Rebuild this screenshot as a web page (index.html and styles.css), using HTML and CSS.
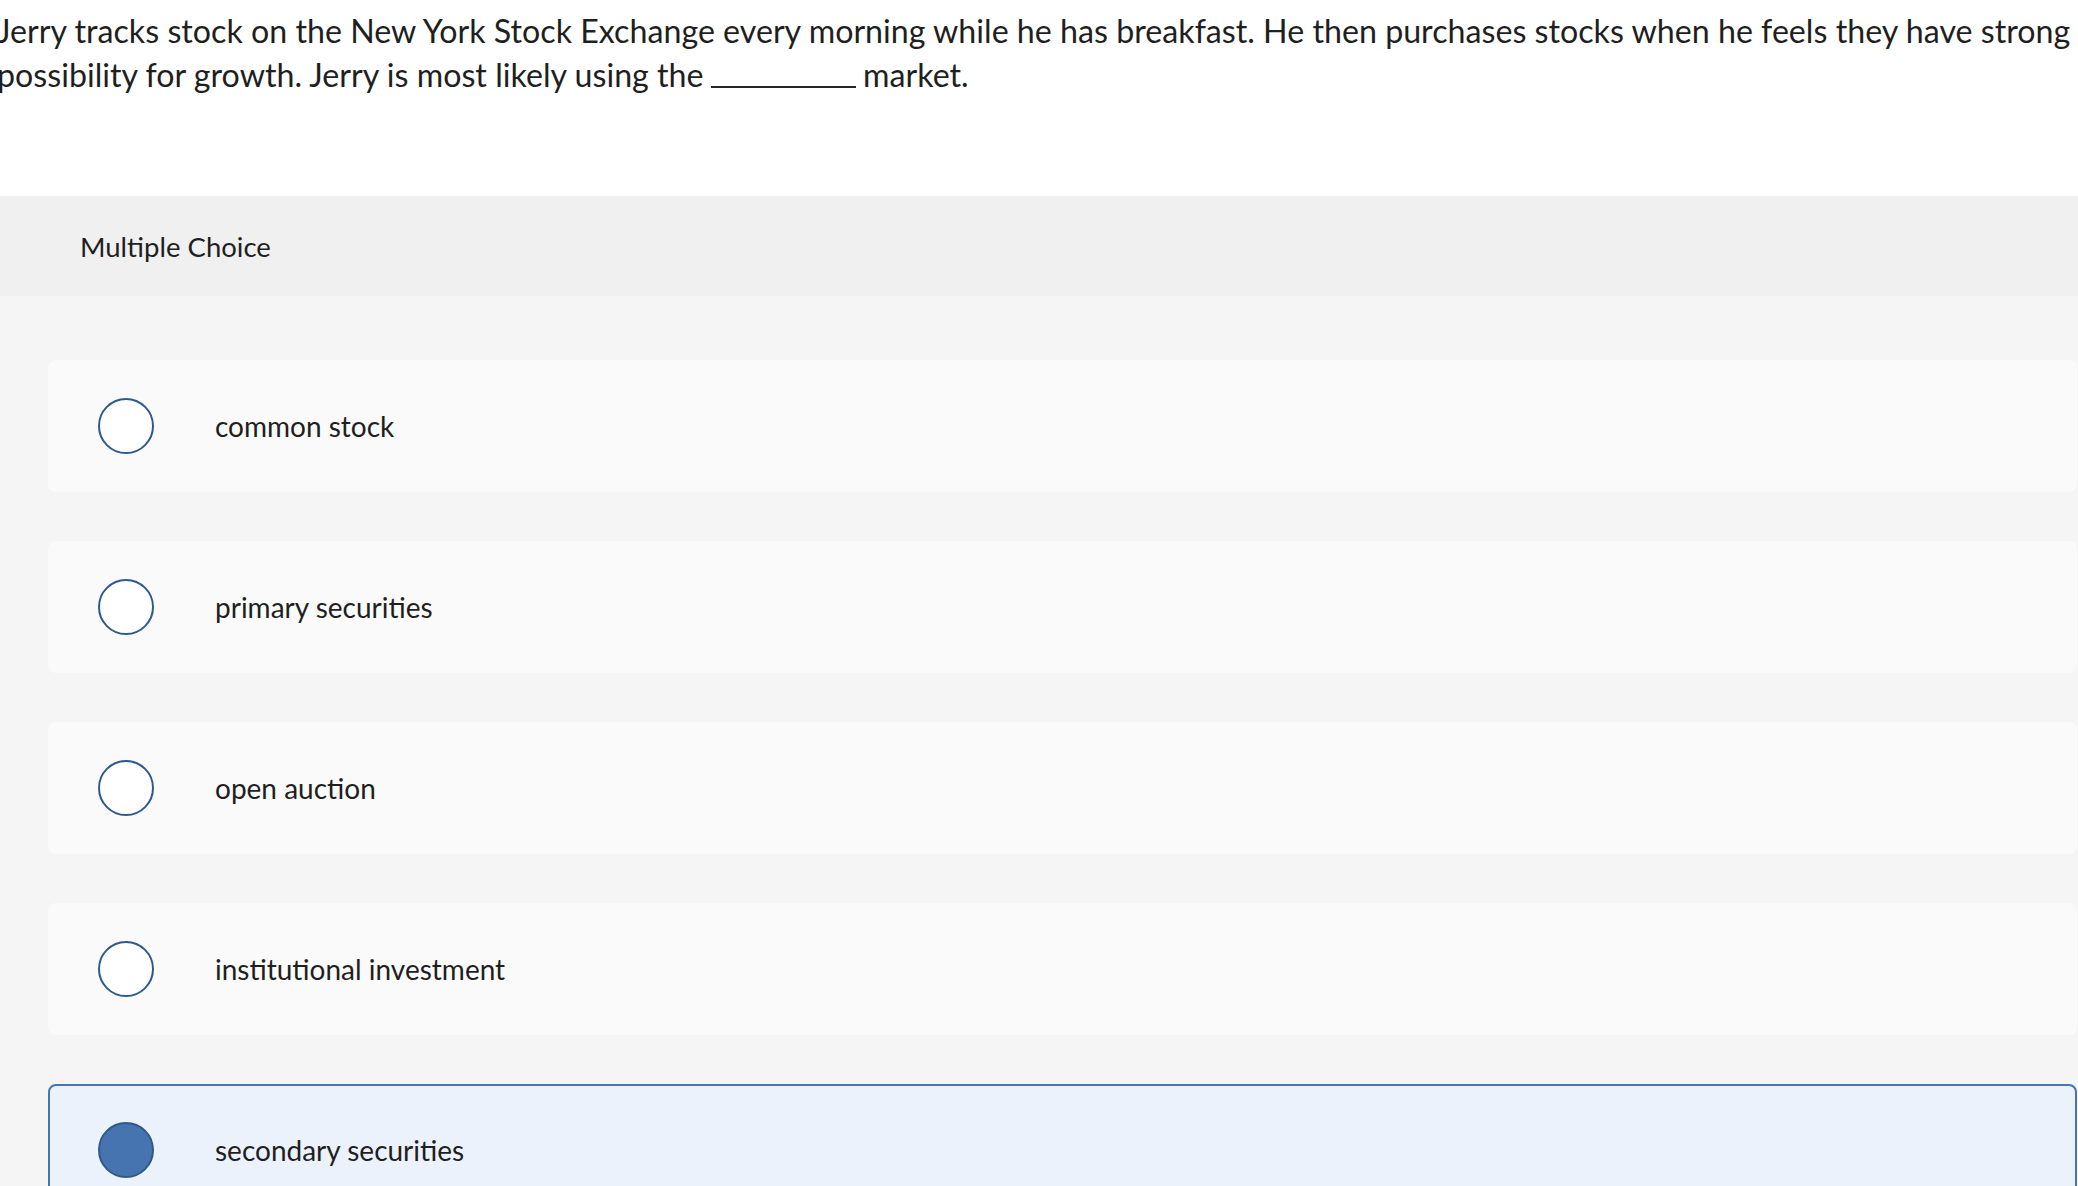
FILE: index.html
```html
<!DOCTYPE html>
<html lang="en">
<head>
<meta charset="utf-8">
<title>Multiple Choice</title>
<link rel="stylesheet" href="styles.css">
</head>
<body>
<div class="page">
  <div class="question">
    <p>Jerry tracks stock on the New York Stock Exchange every morning while he has breakfast. He then purchases stocks when he feels they have strong possibility for growth. Jerry is most likely using the <span class="blank"></span> market.</p>
  </div>
  <div class="mc-header">Multiple Choice</div>
  <div class="choices">
    <div class="choice"><span class="radio"></span><span class="label">common stock</span></div>
    <div class="choice"><span class="radio"></span><span class="label">primary securities</span></div>
    <div class="choice"><span class="radio"></span><span class="label">open auction</span></div>
    <div class="choice"><span class="radio"></span><span class="label">institutional investment</span></div>
    <div class="choice selected"><span class="radio"></span><span class="label">secondary securities</span></div>
  </div>
</div>
</body>
</html>
```
FILE: styles.css
```css
html, body {
  margin: 0;
  padding: 0;
  background: #f5f5f5;
}
body {
  font-family: Lato, "Open Sans", sans-serif;
  color: #1f1f1f;
  height: 1186px;
  overflow: hidden;
}
.page {
  width: 2078px;
}
.question {
  background: #fff;
  padding: 9px 0 99px 0;
  margin-left: -3px;
}
.question p {
  margin: 0;
  font-size: 32.2px;
  line-height: 44px;
  width: 2081px;
}
.second {
  letter-spacing: -0.1px;
}
.blank {
  display: inline-block;
  width: 145px;
  height: 0;
  border-bottom: 2.5px solid #262626;
  vertical-align: -1px;
  margin: 0 -1px;
}
.mc-header {
  background: #f0f0f0;
  height: 100px;
  display: flex;
  align-items: center;
  padding-left: 80px;
  font-size: 27.5px;
}
.choices {
  display: flex;
  flex-direction: column;
  gap: 49px;
  padding: 64px 1px 0 48px;
}
.choice {
  box-sizing: border-box;
  height: 132px;
  background: #fafafa;
  border: 2px solid transparent;
  border-radius: 8px;
  display: flex;
  align-items: center;
  padding-left: 48px;
}
.radio {
  box-sizing: border-box;
  width: 56px;
  height: 56px;
  border-radius: 50%;
  border: 2.5px solid #2d5a8d;
  background: #fff;
  flex: none;
}
.label {
  margin-left: 61px;
  font-size: 28px;
}
.choice.selected {
  background: #ebf2fb;
  border-color: #4475b4;
}
.choice.selected .radio {
  background: #4674b0;
  border-color: #2f5a87;
}
```
